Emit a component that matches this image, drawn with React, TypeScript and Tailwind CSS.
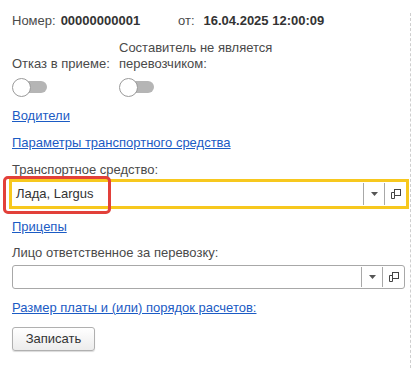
import React from 'react';

const Toggle = () => (
  <div className="relative h-[19px] w-[35px]">
    <div className="absolute left-[1px] top-[3px] h-[12px] w-[34px] rounded-full bg-[#b5b5b5]" />
    <div className="absolute left-0 top-0 h-[19px] w-[19px] rounded-full border border-[#9a9a9a] bg-white" />
  </div>
);

const OpenIcon = () => (
  <svg width="11" height="11" viewBox="0 0 11 11" fill="none" stroke="#444" strokeWidth="1">
    <rect x="4.5" y="0.5" width="6" height="6" />
    <path d="M4.5 3.5H1.5V9.5H4.5V7" />
  </svg>
);

const Arrow = () => (
  <svg width="7" height="4" viewBox="0 0 7 4">
    <path d="M0 0H7L3.5 4Z" fill="#555" />
  </svg>
);

const InputButtons = () => (
  <div className="flex h-full">
    <div className="my-[1px] w-px bg-[#a8a8a8]" />
    <div className="flex w-[20px] items-center justify-center">
      <Arrow />
    </div>
    <div className="my-[1px] w-px bg-[#a8a8a8]" />
    <div className="flex w-[21px] items-center justify-center">
      <OpenIcon />
    </div>
  </div>
);

const LinkText = ({ children }: { children: React.ReactNode }) => (
  <a href="#" className="leading-4 text-[#1b5bc4] underline">
    {children}
  </a>
);

const App = () => {
  return (
    <div
      className="mt-[13px] h-[355px] w-[411px] border-r border-dashed border-[#cfcfcf] pl-[12px] text-[13px] text-[#4a4a4a]"
      style={{ fontFamily: '"Liberation Sans", Arial, sans-serif' }}
    >
      <div className="flex h-4 items-center leading-4">
        <div className="flex w-[166px]">
          <span>Номер:</span>
          <span className="ml-[5px] font-bold text-[#333]">00000000001</span>
        </div>
        <span>от:</span>
        <span className="ml-[9px] font-bold text-[#333]">16.04.2025 12:00:09</span>
      </div>

      <div className="mt-[11px] flex items-end leading-4">
        <div className="w-[107px]">Отказ в приеме:</div>
        <div className="w-[200px]">
          Составитель не является
          <br />
          перевозчиком:
        </div>
      </div>

      <div className="mt-[6px] flex">
        <div className="w-[107px]">
          <Toggle />
        </div>
        <Toggle />
      </div>

      <div className="mt-[11px] flex flex-col items-start gap-[11px]">
        <LinkText>Водители</LinkText>
        <LinkText>Параметры транспортного средства</LinkText>
      </div>

      <div className="mt-[11px] leading-4">Транспортное средство:</div>
      <div className="relative mt-[4px] flex h-[24px] w-[394px] items-center bg-white ring-[3px] ring-[#f7c81e]">
        <div className="flex-1 pl-[4px] text-[#333]">Лада, Largus</div>
        <InputButtons />
        <div className="absolute left-[-9px] top-[-6px] h-[38px] w-[108px] rounded-[5px] border-[3px] border-[#e2403a]" />
      </div>

      <div className="mt-[13px] flex">
        <LinkText>Прицепы</LinkText>
      </div>

      <div className="mt-[10px] leading-4">Лицо ответственное за перевозку:</div>
      <div className="mt-[4px] flex h-[24px] w-[393px] items-center rounded-[3px] border border-[#a8a8a8] bg-white">
        <div className="flex-1" />
        <InputButtons />
      </div>

      <div className="mt-[11px] flex">
        <LinkText>Размер платы и (или) порядок расчетов:</LinkText>
      </div>

      <button className="mt-[11px] h-[24px] w-[83px] rounded-[3px] border border-[#b0b0b0] bg-gradient-to-b from-white to-[#ececec] text-[13px] text-[#333] shadow-[0_1px_1px_rgba(0,0,0,0.15)]">
        Записать
      </button>
    </div>
  );
};

export default App;
